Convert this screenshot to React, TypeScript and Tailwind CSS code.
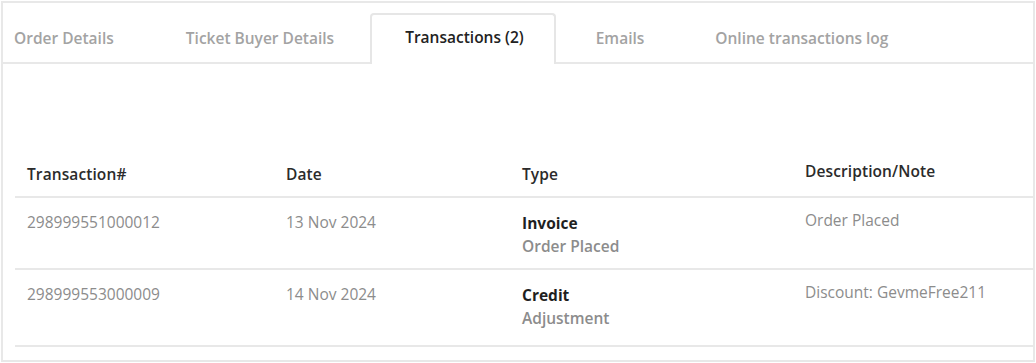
import React from "react";

const tabs = [
  { label: "Order Details", active: false, pad: "pr-[36px]" },
  { label: "Ticket Buyer Details", active: false, pad: "px-[36px]" },
  { label: "Transactions (2)", active: true, pad: "pl-[33px] pr-[30px]" },
  { label: "Emails", active: false, pad: "pl-[40px] pr-[35px]" },
  { label: "Online transactions log", active: false, pad: "px-[36px]" },
];

const rows = [
  {
    id: "298999551000012",
    date: "13 Nov 2024",
    type: "Invoice",
    sub: "Order Placed",
    desc: "Order Placed",
    h: "h-[72px]",
  },
  {
    id: "298999553000009",
    date: "14 Nov 2024",
    type: "Credit",
    sub: "Adjustment",
    desc: "Discount: GevmeFree211",
    h: "h-[77px]",
  },
];

export default function App() {
  return (
    <div
      className="w-[1036px] h-[363px] bg-white pt-px pl-px"
      style={{ fontFamily: '"Open Sans", "Noto Sans", sans-serif' }}
    >
      <div className="w-[1034px] h-[361px] border-2 border-[#e8e8e8] flex flex-col">
        <div className="h-[61px] border-b-2 border-[#e8e8e8] flex items-end pl-[11px]">
          {tabs.map((t) =>
            t.active ? (
              <div
                key={t.label}
                className={`h-[51px] mb-[-2px] pb-[3px] ${t.pad} flex items-center border-2 border-b-0 border-[#e6e6e6] rounded-t-[4px] bg-white text-[15.5px] font-semibold text-[#222]`}
              >
                {t.label}
              </div>
            ) : (
              <div
                key={t.label}
                className={`h-[49px] pt-[2px] ${t.pad} flex items-center text-[15.5px] font-semibold text-[#a3a3a3]`}
              >
                {t.label}
              </div>
            )
          )}
        </div>
        <div className="pl-[12px] pt-[86px]">
          <div className="grid grid-cols-[259px_236px_283px_1fr] h-[48px] border-b-2 border-[#e8e8e8] text-[15.5px] font-semibold text-[#2b2b2b] tracking-[0.1px]">
            <div className="pl-[12px] pt-[13px]">Transaction#</div>
            <div className="pl-[12px] pt-[13px]">Date</div>
            <div className="pl-[12px] pt-[13px]">Type</div>
            <div className="pl-[12px] pt-[10px]">Description/Note</div>
          </div>
          {rows.map((r) => (
            <div
              key={r.id}
              className={`grid grid-cols-[259px_236px_283px_1fr] ${r.h} border-b-2 border-[#e8e8e8] text-[15.5px]`}
            >
              <div className="pl-[12px] pt-[13px] text-[#8c8c8c] leading-[22px]">{r.id}</div>
              <div className="pl-[12px] pt-[13px] text-[#8c8c8c] leading-[22px]">{r.date}</div>
              <div className="pl-[12px] pt-[14px] leading-[23px]">
                <div className="font-bold text-[#1f1f1f]">{r.type}</div>
                <div className="font-semibold text-[#8c8c8c]">{r.sub}</div>
              </div>
              <div className="pl-[12px] pt-[11px] text-[#8c8c8c] leading-[22px]">{r.desc}</div>
            </div>
          ))}
        </div>
      </div>
    </div>
  );
}
